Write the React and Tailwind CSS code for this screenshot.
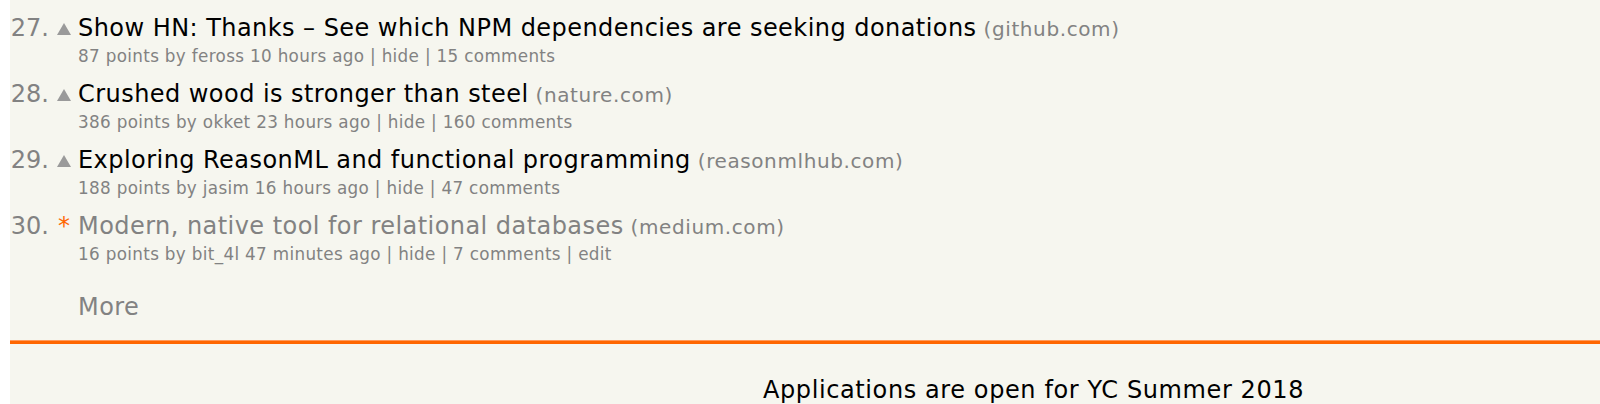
const stories = [
  {
    rank: 27,
    title: "Show HN: Thanks – See which NPM dependencies are seeking donations",
    site: "github.com",
    points: 87,
    user: "feross",
    age: "10 hours ago",
    comments: "15 comments",
  },
  {
    rank: 28,
    title: "Crushed wood is stronger than steel",
    site: "nature.com",
    points: 386,
    user: "okket",
    age: "23 hours ago",
    comments: "160 comments",
  },
  {
    rank: 29,
    title: "Exploring ReasonML and functional programming",
    site: "reasonmlhub.com",
    points: 188,
    user: "jasim",
    age: "16 hours ago",
    comments: "47 comments",
  },
  {
    rank: 30,
    title: "Modern, native tool for relational databases",
    site: "medium.com",
    points: 16,
    user: "bit_4l",
    age: "47 minutes ago",
    comments: "7 comments",
    mine: true,
  },
];

const VoteArrow = () => (
  <svg width="14" height="12" viewBox="0 0 14 12" className="mt-[11px]">
    <path d="M7 0 L14 12 L0 12 Z" fill="#9a9a9a" />
  </svg>
);

const Story = ({ s }) => (
  <div>
    <div className="flex h-[32px] leading-[32px] text-[24px]">
      <span className="w-[39px] shrink-0 text-right text-[#828282]">{s.rank}.</span>
      <span className="w-[29px] shrink-0 flex justify-end pr-[7px]">
        {s.mine ? (
          <span className="text-[#ff6600] mr-[1px]">*</span>
        ) : (
          <VoteArrow />
        )}
      </span>
      <span className="whitespace-nowrap tracking-[0.45px]">
        <span className={s.mine ? "text-[#828282]" : "text-black"}>{s.title}</span>
        <span className="text-[20px] tracking-[0.6px] text-[#828282]"> ({s.site})</span>
      </span>
    </div>
    <div className="h-[25px] leading-[25px] text-[16.8px] tracking-[0.33px] text-[#828282] pl-[68px] whitespace-nowrap">
      {s.points} points by {s.user} {s.age} | hide | {s.comments}
      {s.mine && " | edit"}
    </div>
    <div className="h-[9px]" />
  </div>
);

export default function App() {
  return (
    <div
      className="bg-white w-[1600px] h-[404px] overflow-hidden pl-[10px]"
      style={{ fontFamily: 'Verdana, "DejaVu Sans", sans-serif' }}
    >
      <div className="bg-[#f6f6ef] h-full pt-[12px]">
        {stories.map((s) => (
          <Story key={s.rank} s={s} />
        ))}
        <div className="h-[15px]" />
        <div className="h-[32px] leading-[32px] text-[24px] tracking-[0.45px] text-[#828282] pl-[68px]">More</div>
        <div className="h-[16.5px]" />
        <div className="h-[4px] bg-[#ff6600] border-t border-[#ff9a5c]" />
        <div className="h-[30px]" />
        <div className="h-[32px] leading-[32px] text-[24px] tracking-[0.6px] text-black pl-[753px] whitespace-nowrap">
          Applications are open for YC Summer 2018
        </div>
      </div>
    </div>
  );
}
